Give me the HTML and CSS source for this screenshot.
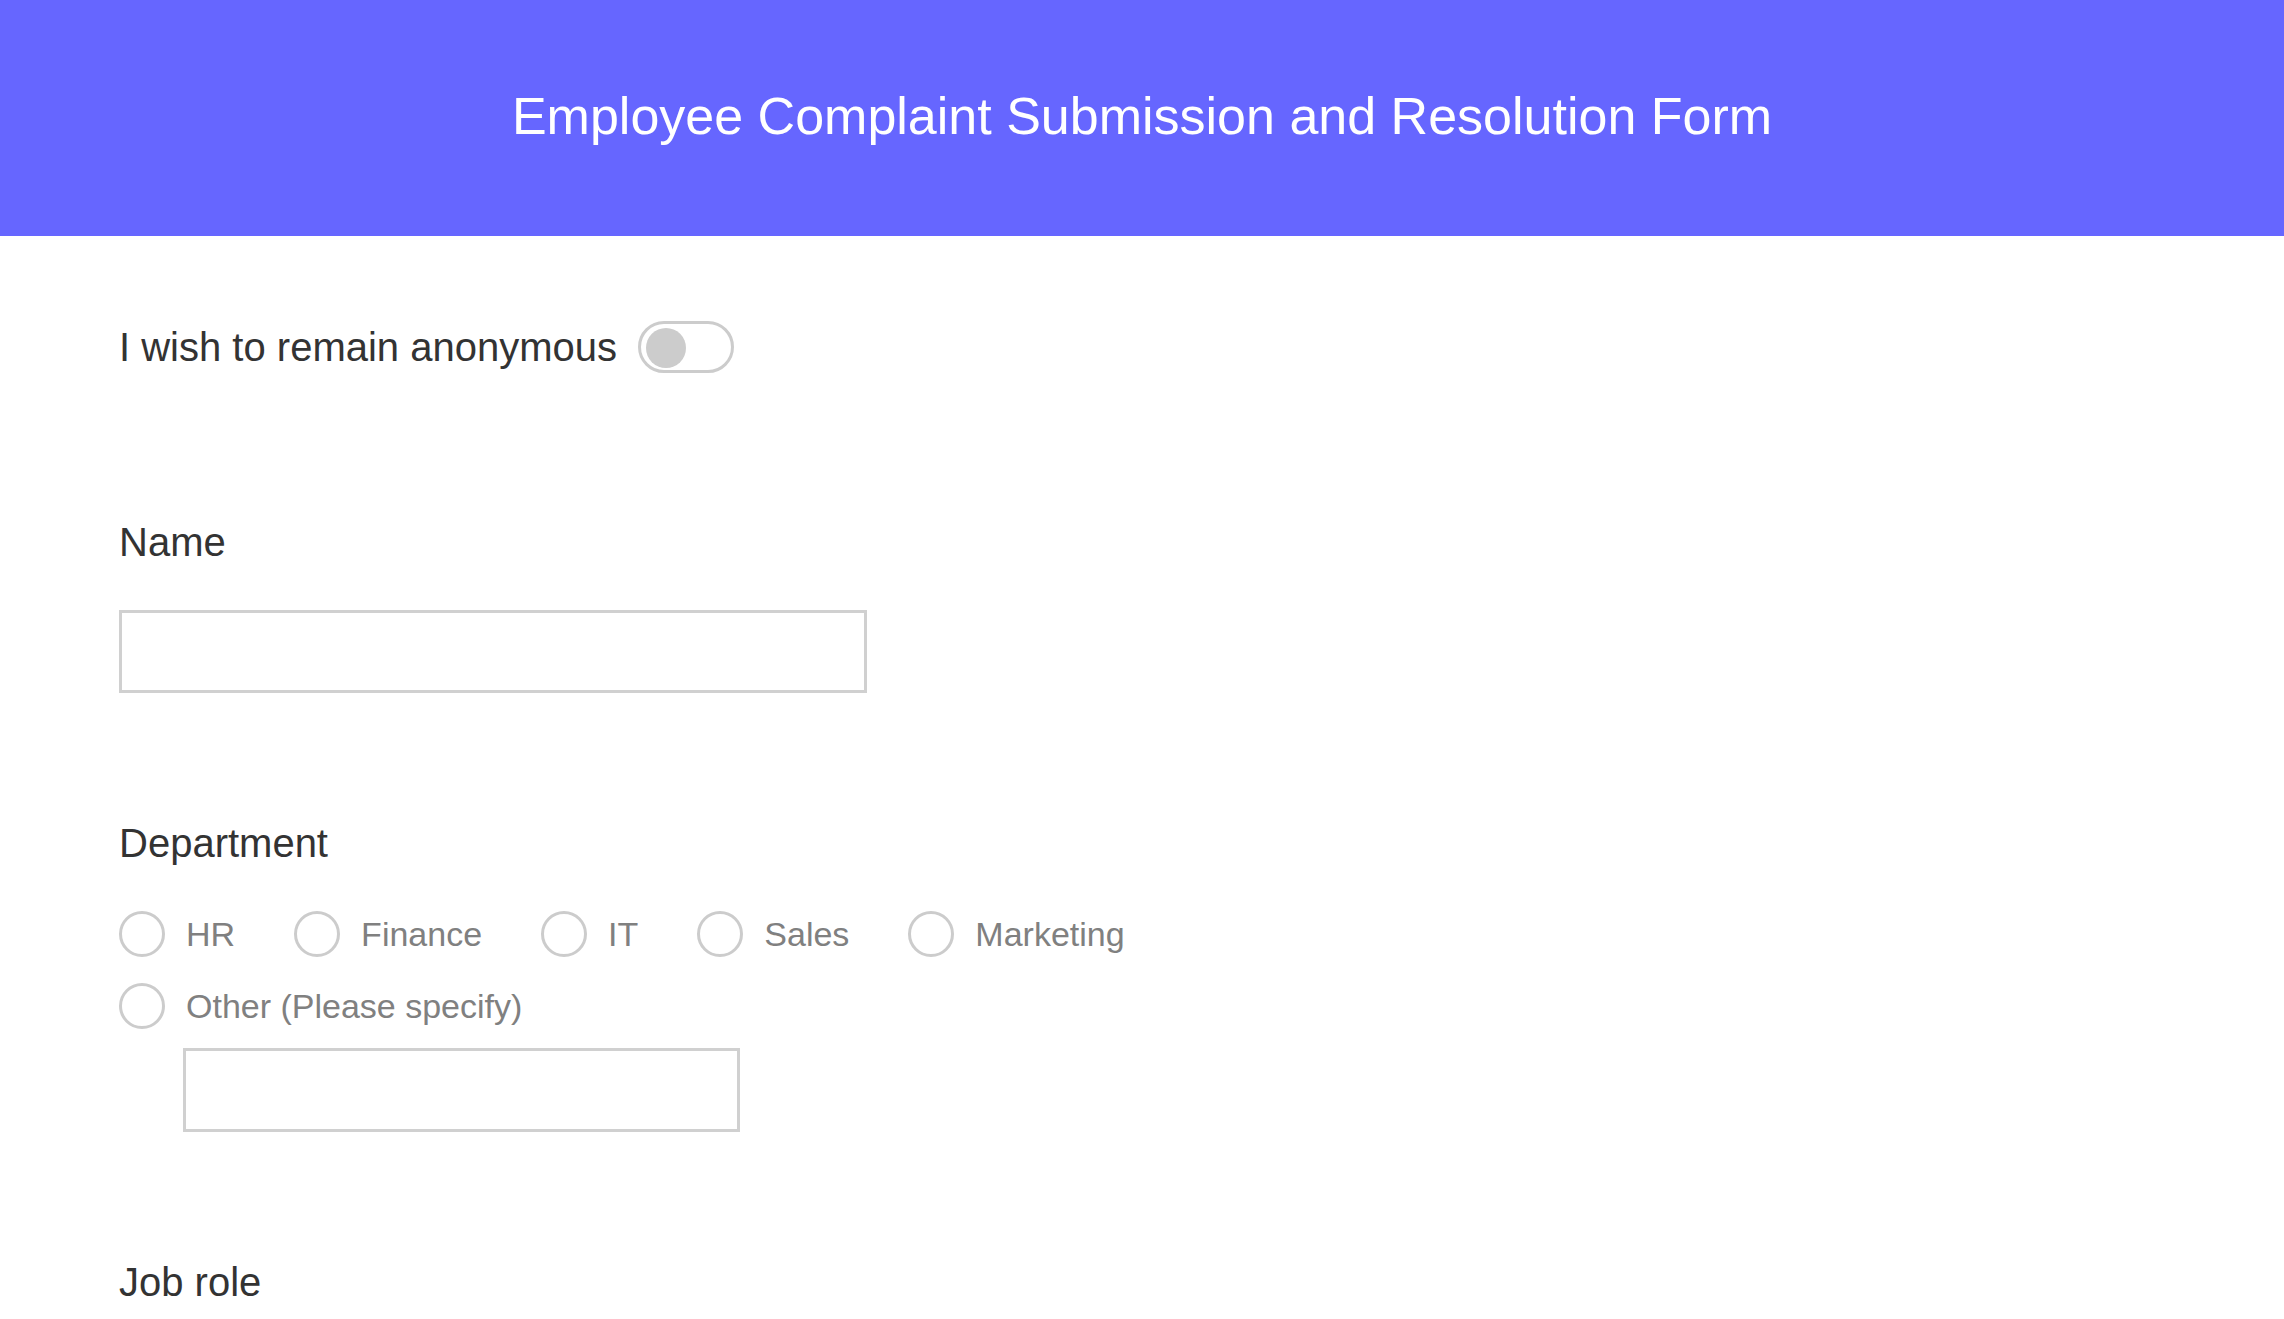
FILE: index.html
```html
<!DOCTYPE html>
<html lang="en">
  <head>
    <meta charset="UTF-8" />
    <meta name="viewport" content="width=device-width, initial-scale=1.0" />
    <title>Employee Complaint Submission and Resolution Form</title>
    <link rel="stylesheet" href="styles.css">
  </head>
  <body>
    <header class="header">
      <h1>Employee Complaint Submission and Resolution Form</h1>
    </header>

    <form class="form">
      <div class="anon-row">
        <span>I wish to remain anonymous</span>
        <label class="switch">
          <input type="checkbox" />
          <span class="knob"></span>
        </label>
      </div>

      <div class="field">
        <label class="field-label" for="name">Name</label>
        <input type="text" id="name" class="text-input name-input" />
      </div>

      <div class="field">
        <div class="field-label">Department</div>
        <div class="radio-row">
          <label class="radio"><input type="radio" name="dept" /><span class="circle"></span>HR</label>
          <label class="radio"><input type="radio" name="dept" /><span class="circle"></span>Finance</label>
          <label class="radio"><input type="radio" name="dept" /><span class="circle"></span>IT</label>
          <label class="radio"><input type="radio" name="dept" /><span class="circle"></span>Sales</label>
          <label class="radio"><input type="radio" name="dept" /><span class="circle"></span>Marketing</label>
        </div>
        <div class="radio-row">
          <label class="radio"><input type="radio" name="dept" /><span class="circle"></span>Other (Please specify)</label>
        </div>
        <input type="text" class="text-input other-input" />
      </div>

      <div class="field">
        <label class="field-label" for="role">Job role</label>
        <input type="text" id="role" class="text-input name-input" />
      </div>
    </form>
  </body>
</html>
```

FILE: styles.css
```css
body {
  font-family: "Liberation Sans", Arial, sans-serif;
  margin: 0;
  padding: 0;
  background: #fff;
  color: #333;
}
.header {
  background-color: #6666ff;
  height: 236px;
  display: flex;
  align-items: center;
  justify-content: center;
}
.header h1 {
  margin: 0;
  color: #fff;
  font-size: 52px;
  font-weight: normal;
  position: relative;
  top: -2px;
}
.form {
  padding: 85px 119px 0;
}
.anon-row {
  display: flex;
  align-items: center;
  gap: 21px;
  font-size: 40px;
  height: 52px;
  margin-bottom: 146px;
}
.switch {
  position: relative;
  width: 96px;
  height: 52px;
  box-sizing: border-box;
  border: 3px solid #ccc;
  border-radius: 26px;
  background: #fff;
}
.switch input {
  display: none;
}
.switch .knob {
  position: absolute;
  left: 5px;
  top: 4px;
  width: 40px;
  height: 40px;
  border-radius: 50%;
  background: #ccc;
}
.field {
  margin-bottom: 127px;
}
.field-label {
  display: block;
  font-size: 40px;
  line-height: 46px;
  margin-bottom: 45px;
}
.text-input {
  display: block;
  box-sizing: border-box;
  border: 3px solid #d0d0d0;
  border-radius: 0;
  background: #fff;
  font-size: 34px;
  padding: 0 16px;
}
.name-input {
  width: 748px;
  height: 83px;
}
.other-input {
  width: 557px;
  height: 84px;
  margin-left: 64px;
  margin-top: 19px;
}
.radio-row {
  display: flex;
  gap: 59px;
}
.radio-row + .radio-row {
  margin-top: 26px;
}
.radio {
  display: flex;
  align-items: center;
  font-size: 34px;
  color: #808080;
  height: 46px;
}
.radio input {
  display: none;
}
.radio .circle {
  width: 46px;
  height: 46px;
  box-sizing: border-box;
  border: 3px solid #ccc;
  border-radius: 50%;
  margin-right: 21px;
}
```
